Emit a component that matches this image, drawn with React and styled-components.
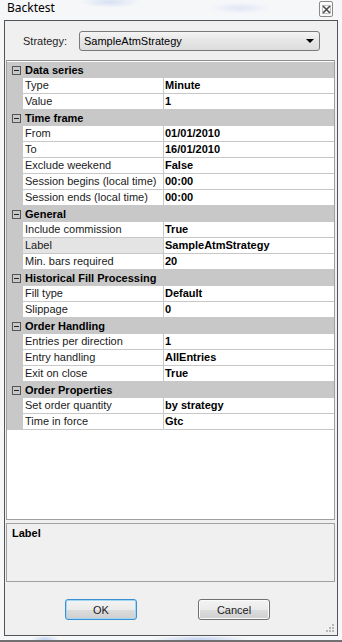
import styled, { createGlobalStyle } from "styled-components";

const GlobalStyle = createGlobalStyle`
  html, body {
    margin: 0;
    padding: 0;
  }
  body {
    width: 342px;
    height: 642px;
    overflow: hidden;
    font-family: "Liberation Sans", Arial, sans-serif;
    font-size: 11px;
    color: #000;
  }
  * {
    box-sizing: border-box;
  }
`;

const categories = [
  {
    title: "Data series",
    rows: [
      ["Type", "Minute"],
      ["Value", "1"],
    ],
  },
  {
    title: "Time frame",
    rows: [
      ["From", "01/01/2010"],
      ["To", "16/01/2010"],
      ["Exclude weekend", "False"],
      ["Session begins (local time)", "00:00"],
      ["Session ends (local time)", "00:00"],
    ],
  },
  {
    title: "General",
    rows: [
      ["Include commission", "True"],
      ["Label", "SampleAtmStrategy", true],
      ["Min. bars required", "20"],
    ],
  },
  {
    title: "Historical Fill Processing",
    rows: [
      ["Fill type", "Default"],
      ["Slippage", "0"],
    ],
  },
  {
    title: "Order Handling",
    rows: [
      ["Entries per direction", "1"],
      ["Entry handling", "AllEntries"],
      ["Exit on close", "True"],
    ],
  },
  {
    title: "Order Properties",
    rows: [
      ["Set order quantity", "by strategy"],
      ["Time in force", "Gtc"],
    ],
  },
];

export default function App() {
  return (
    <>
      <GlobalStyle />
      <Page>
        <TitleBar>
          <Title>Backtest</Title>
          <CloseButton>
            <svg width="9" height="9" viewBox="0 0 9 9">
              <path
                d="M1 1 L8 8 M8 1 L1 8"
                stroke="#4a4a4a"
                strokeWidth="1.6"
                fill="none"
              />
              <rect x="0.5" y="0.5" width="8" height="8" fill="none" stroke="#9a9a9a" strokeWidth="0.6" />
            </svg>
          </CloseButton>
        </TitleBar>

        <Window>
          <StrategyRow>
            <StrategyLabel>Strategy:</StrategyLabel>
            <Combo>
              <span>SampleAtmStrategy</span>
              <Arrow />
            </Combo>
          </StrategyRow>

          <Grid>
            {categories.map((cat) => (
              <div key={cat.title}>
                <CategoryRow>
                  <Gutter>
                    <Toggle />
                  </Gutter>
                  <CategoryTitle>{cat.title}</CategoryTitle>
                </CategoryRow>
                {cat.rows.map(([name, value, selected]) => (
                  <PropRow key={name}>
                    <Gutter />
                    <NameCell selected={selected}>{name}</NameCell>
                    <ValueCell>{value}</ValueCell>
                  </PropRow>
                ))}
              </div>
            ))}
          </Grid>

          <HelpPanel>
            <HelpTitle>Label</HelpTitle>
          </HelpPanel>

          <ButtonRow>
            <DialogButton isDefault>OK</DialogButton>
            <DialogButton>Cancel</DialogButton>
          </ButtonRow>

          <Grip>
            <svg width="8" height="8" viewBox="0 0 8 8">
              {[
                [6, 0],
                [6, 3],
                [3, 3],
                [6, 6],
                [3, 6],
                [0, 6],
              ].map(([x, y]) => (
                <rect key={`${x}-${y}`} x={x} y={y} width="2" height="2" fill="#b8b8b8" />
              ))}
            </svg>
          </Grip>
        </Window>
        <BottomEdge />
      </Page>
    </>
  );
}

const Page = styled.div`
  width: 342px;
  height: 642px;
  display: flex;
  flex-direction: column;
  background:
    radial-gradient(ellipse 30px 6px at 110px 2px, rgba(120, 160, 230, 0.25), transparent),
    radial-gradient(ellipse 30px 6px at 240px 8px, rgba(120, 160, 230, 0.18), transparent),
    radial-gradient(ellipse 50px 3px at 200px 639px, rgba(90, 140, 220, 0.35), transparent),
    radial-gradient(ellipse 14px 3px at 45px 639px, rgba(90, 140, 220, 0.35), transparent),
    #f6f7f9;
`;

const TitleBar = styled.div`
  height: 20px;
  display: flex;
  justify-content: space-between;
  align-items: flex-start;
  padding: 0 9px 0 7px;
`;

const Title = styled.div`
  font-family: "Noto Sans", "Open Sans", sans-serif;
  font-size: 12px;
  line-height: 16px;
  margin-top: 0px;
  color: #000;
`;

const CloseButton = styled.div`
  width: 14px;
  height: 16px;
  margin-top: 1px;
  border: 1px solid #8a8a8a;
  border-radius: 2px;
  background: #fbfbfb;
  display: flex;
  align-items: center;
  justify-content: center;
`;

const Window = styled.div`
  position: relative;
  height: 616px;
  margin: 0 4px;
  border: 1px solid #555;
  background: #f0f0f0;
  display: flex;
  flex-direction: column;
  padding: 0 3px 0 1px;
`;

const StrategyRow = styled.div`
  height: 39px;
  padding-top: 10px;
  display: flex;
  align-items: flex-start;
`;

const StrategyLabel = styled.div`
  width: 73px;
  padding-left: 17px;
  line-height: 20px;
  color: #1e1e1e;
`;

const Combo = styled.div`
  width: 241px;
  height: 20px;
  border: 1px solid #7a7a7a;
  border-radius: 3px;
  background: linear-gradient(#f4f4f4, #e6e6e6 50%, #dcdcdc);
  display: flex;
  align-items: center;
  justify-content: space-between;
  padding: 0 5px 0 4px;
  line-height: 18px;
`;

const Arrow = styled.div`
  width: 0;
  height: 0;
  border-left: 4px solid transparent;
  border-right: 4px solid transparent;
  border-top: 4px solid #000;
`;

const Grid = styled.div`
  width: 329px;
  height: 460px;
  border: 1px solid #a0a0a0;
  border-top-color: #8c8c8c;
  background: #fff;
  padding-top: 1px;
  overflow: hidden;
`;

const CategoryRow = styled.div`
  display: flex;
  height: 16px;
  background: #c8c8c8;
`;

const Gutter = styled.div`
  width: 16px;
  flex: none;
  background: #c8c8c8;
  display: flex;
  align-items: center;
  justify-content: center;
`;

const Toggle = styled.div`
  position: relative;
  width: 9px;
  height: 9px;
  border: 1px solid #555;
  margin-left: 2px;

  &::after {
    content: "";
    position: absolute;
    left: 1px;
    right: 1px;
    top: 3px;
    height: 1px;
    background: #222;
  }
`;

const CategoryTitle = styled.div`
  padding-left: 2px;
  font-weight: bold;
  line-height: 16px;
  white-space: nowrap;
`;

const PropRow = styled.div`
  display: flex;
  height: 16px;
`;

const NameCell = styled.div`
  width: 141px;
  flex: none;
  padding-left: 2px;
  line-height: 15px;
  white-space: nowrap;
  overflow: hidden;
  color: #1a1a1a;
  background: ${(props) => (props.selected ? "#e4e4e4" : "#fff")};
  border-right: 1px solid #c8c8c8;
  border-bottom: 1px solid #c8c8c8;
`;

const ValueCell = styled.div`
  flex: 1;
  padding-left: 1px;
  line-height: 15px;
  font-weight: bold;
  white-space: nowrap;
  border-bottom: 1px solid #c8c8c8;
`;

const HelpPanel = styled.div`
  width: 329px;
  height: 59px;
  margin-top: 3px;
  border: 1px solid #a0a0a0;
  background: #f0f0f0;
  padding: 3px 5px;
`;

const HelpTitle = styled.div`
  font-weight: bold;
  line-height: 13px;
`;

const ButtonRow = styled.div`
  display: flex;
  gap: 61px;
  margin-top: 17px;
  padding-left: 59px;
`;

const DialogButton = styled.div`
  width: 72px;
  height: 21px;
  border: 1px solid ${(props) => (props.isDefault ? "#3c8fd0" : "#707070")};
  box-shadow: ${(props) =>
    props.isDefault ? "inset 0 0 0 1px #9fd7f5" : "inset 0 0 0 1px #fafafa"};
  border-radius: 3px;
  background: linear-gradient(#f3f3f3, #ebebeb 50%, #dddddd 50%, #cfcfcf);
  display: flex;
  align-items: center;
  justify-content: center;
  color: #1a1a1a;
`;

const Grip = styled.div`
  position: absolute;
  right: 3px;
  bottom: 3px;
  display: flex;
`;

const BottomEdge = styled.div`
  flex: 1;
  border-bottom: 2px solid #707070;
`;
